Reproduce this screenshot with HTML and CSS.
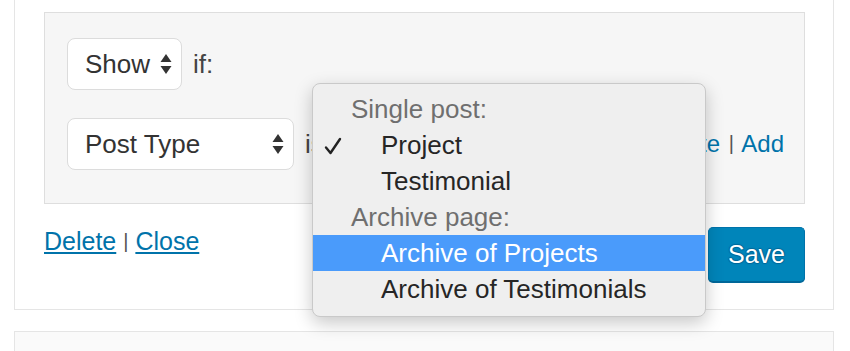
FILE: index.html
```html
<!DOCTYPE html>
<html lang="en">
<head>
    <meta charset="UTF-8">
    <title>Display Conditions</title>
    <link rel="stylesheet" href="styles.css">
</head>
<body>
    <div class="card">
        <div class="rules">
            <div class="rule-row">
                <div class="select select-action">
                    <span>Show</span>
                    <svg class="arrows" width="12" height="22" viewBox="0 0 12 22"><path d="M6 1 L11.5 9 H0.5 Z M6 21 L11.5 13 H0.5 Z" fill="#333"/></svg>
                </div>
                <span class="label">if:</span>
            </div>
            <div class="rule-row">
                <div class="select select-type">
                    <span>Post Type</span>
                    <svg class="arrows" width="12" height="22" viewBox="0 0 12 22"><path d="M6 1 L11.5 9 H0.5 Z M6 21 L11.5 13 H0.5 Z" fill="#333"/></svg>
                </div>
                <span class="label">is</span>
                <div class="select select-value"></div>
                <div class="row-links">
                    <a href="#">Delete</a> <span class="sep">|</span> <a href="#">Add</a>
                </div>
            </div>
        </div>
        <div class="footer">
            <div class="footer-links">
                <a href="#">Delete</a> <span class="sep">|</span> <a href="#">Close</a>
            </div>
            <button class="save-btn">Save</button>
        </div>
    </div>
    <div class="card card-next"></div>

    <div class="popup">
        <div class="popup-group">Single post:</div>
        <div class="popup-item">
            <svg class="check" width="18" height="18" viewBox="0 0 18 18"><path d="M2 10.5 L6.5 16 L16 2" fill="none" stroke="#222" stroke-width="2.4" stroke-linecap="round" stroke-linejoin="round"/></svg>
            Project
        </div>
        <div class="popup-item">Testimonial</div>
        <div class="popup-group">Archive page:</div>
        <div class="popup-item active">Archive of Projects</div>
        <div class="popup-item">Archive of Testimonials</div>
    </div>
</body>
</html>
```
FILE: styles.css
```css
body {
    background: #fff;
    font-family: "Liberation Sans", Arial, sans-serif;
    margin: 0;
    padding: 0;
    color: #333;
}
.card {
    margin: 0 16px 0 14px;
    background: #fff;
    border: 1px solid #e5e5e5;
    border-top: none;
    padding: 12px 28px 27px 29px;
}
.card-next {
    margin-top: 21px;
    border-top: 1px solid #e5e5e5;
    background: #fafafa;
    height: 40px;
    padding: 0;
}
.rules {
    background: #f6f6f6;
    border: 1px solid #dedede;
    padding: 25px 20px 33px 22px;
    display: flex;
    flex-direction: column;
    gap: 28px;
}
.rule-row {
    display: flex;
    align-items: center;
    height: 52px;
}
.select {
    box-sizing: border-box;
    height: 52px;
    background: #fff;
    border: 1px solid #dcdcdc;
    border-radius: 8px;
    display: flex;
    align-items: center;
    justify-content: space-between;
    padding: 0 9px 0 17px;
    font-size: 26px;
    color: #333;
}
.select-action {
    width: 115px;
}
.select-type {
    width: 227px;
}
.select-value {
    width: 300px;
    margin-left: 8px;
}
.arrows {
    display: block;
}
.label {
    font-size: 26px;
    color: #444;
    margin-left: 11px;
}
.row-links {
    margin-left: auto;
    font-size: 24px;
}
a {
    color: #0073aa;
}
.row-links a {
    text-decoration: none;
}
.sep {
    color: #555;
    font-size: 20px;
    position: relative;
    top: -2px;
}
.row-links .sep {
    margin: 0 2px;
}
.footer {
    display: flex;
    justify-content: space-between;
    align-items: flex-start;
    margin-top: 23px;
}
.footer-links {
    font-size: 25px;
    line-height: 28px;
}
.save-btn {
    width: 97px;
    height: 55px;
    background: #0085ba;
    border: 1px solid #0073aa;
    border-bottom-color: #006799;
    box-shadow: 0 1px 0 #006799;
    border-radius: 5px;
    color: #fff;
    font-family: "Liberation Sans", Arial, sans-serif;
    font-size: 25px;
    text-shadow: 0 -1px 1px #006799, 1px 0 1px #006799, 0 1px 1px #006799, -1px 0 1px #006799;
    cursor: pointer;
    padding: 0;
}
.popup {
    position: absolute;
    left: 312px;
    top: 83px;
    width: 394px;
    box-sizing: border-box;
    padding: 7px 0 9px 0;
    background: #efefef;
    border: 1px solid #c9c9c9;
    border-radius: 8px;
    box-shadow: 0 6px 18px rgba(0, 0, 0, 0.22);
    font-size: 26px;
}
.popup-group {
    height: 36px;
    line-height: 36px;
    padding-left: 38px;
    color: #6f6f6f;
}
.popup-item {
    height: 36px;
    line-height: 36px;
    padding-left: 68px;
    color: #262626;
    position: relative;
}
.popup-item.active {
    background: #4a9bfb;
    color: #fff;
}
.check {
    position: absolute;
    left: 11px;
    top: 10px;
}
```
